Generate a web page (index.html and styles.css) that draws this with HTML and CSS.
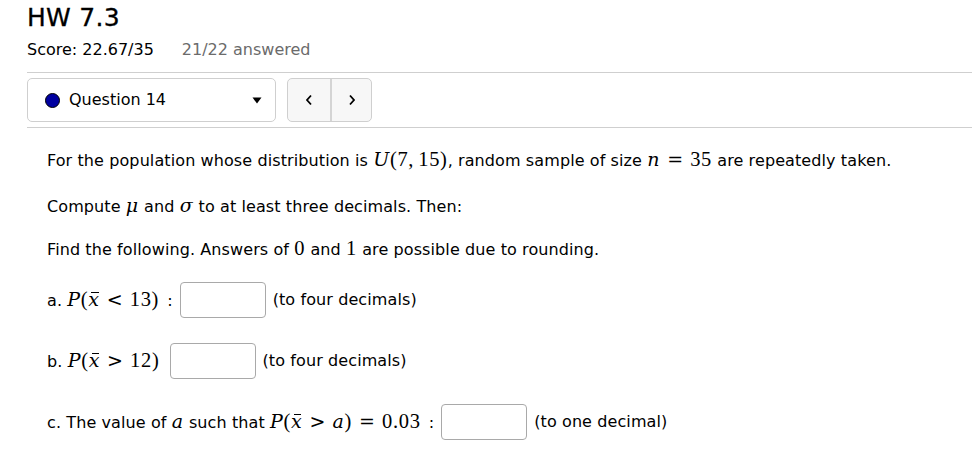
FILE: index.html
```html
<!DOCTYPE html>
<html lang="en">
<head>
<meta charset="utf-8">
<title>HW 7.3</title>
<link rel="stylesheet" href="styles.css">
</head>
<body>
<div class="page">
  <header class="head">
    <h1 class="title">HW 7.3</h1>
    <div class="score"><span>Score: 22.67/35</span><span class="answered">21/22 answered</span></div>
  </header>

  <nav class="navbar">
    <div class="qselect">
      <span class="dot"></span>
      <span class="qname">Question 14</span>
      <svg class="caret" width="10" height="7" viewBox="0 0 10 7"><polygon points="0.5,0.5 9.5,0.5 5,6.5" fill="#000"/></svg>
    </div>
    <div class="pager">
      <button class="pbtn" type="button" aria-label="Previous">
        <svg width="8" height="12" viewBox="0 0 8 12"><polyline points="6,1.5 2,6 6,10.5" fill="none" stroke="#000" stroke-width="1.8"/></svg>
      </button>
      <button class="pbtn" type="button" aria-label="Next">
        <svg width="8" height="12" viewBox="0 0 8 12"><polyline points="2,1.5 6,6 2,10.5" fill="none" stroke="#000" stroke-width="1.8"/></svg>
      </button>
    </div>
  </nav>

  <main class="question">
    <p class="p1">For the population whose distribution is <span class="m"><i>U</i>(7,<span class="thin"></span>15)</span>, random sample of size <span class="m"><i>n</i><span class="rel">=</span>35</span> are repeatedly taken.</p>
    <p class="p2">Compute <span class="m"><i>μ</i></span> and <span class="m"><i>σ</i></span> to at least three decimals. Then:</p>
    <p class="p3">Find the following. Answers of <span class="m">0</span> and <span class="m">1</span> are possible due to rounding.</p>

    <div class="row ra">
      <span class="lbl">a. <span class="m"><i>P</i>(<i class="bar">x</i><span class="rel">&lt;</span>13)</span><span class="colon">:</span></span>
      <input class="ans" type="text">
      <span class="hint">(to four decimals)</span>
    </div>
    <div class="row rb">
      <span class="lbl">b. <span class="m"><i>P</i>(<i class="bar">x</i><span class="rel">&gt;</span>12)</span></span>
      <input class="ans" type="text">
      <span class="hint">(to four decimals)</span>
    </div>
    <div class="row rc">
      <span class="lbl">c. The value of <span class="m"><i>a</i></span> such that <span class="m"><i>P</i>(<i class="bar">x</i><span class="rel">&gt;</span><i>a</i>)<span class="rel">=</span>0.03</span><span class="colon">:</span></span>
      <input class="ans" type="text">
      <span class="hint">(to one decimal)</span>
    </div>
  </main>
</div>
</body>
</html>
```

FILE: styles.css
```css
html, body {
  margin: 0;
  padding: 0;
  background: #fff;
}
body {
  font-family: "DejaVu Sans", "Noto Sans", sans-serif;
  font-size: 16px;
  color: #000;
}
.page {
  padding-left: 27px;
}
.title {
  margin: 3px 0 0 0;
  font-size: 25px;
  line-height: 30px;
  font-weight: normal;
  letter-spacing: 0.3px;
  -webkit-text-stroke: 0.3px #000;
}
.score {
  margin-top: 7px;
  line-height: 20px;
  display: flex;
  gap: 28px;
}
.answered {
  color: #6b6b6b;
}
.navbar {
  margin-top: 12px;
  border-top: 1px solid #cfcfcf;
  border-bottom: 1px solid #cfcfcf;
  padding: 5px 0 5px 0;
  display: flex;
  gap: 11px;
}
.qselect {
  box-sizing: border-box;
  width: 249px;
  height: 44px;
  border: 1px solid #cfcfcf;
  border-radius: 5px;
  display: flex;
  align-items: center;
  padding: 0 13px 0 17px;
}
.dot {
  width: 13px;
  height: 13px;
  border-radius: 50%;
  background: #0000a0;
  border: 1px solid #000;
  flex: none;
}
.qname {
  margin-left: 9px;
  flex: 1;
  line-height: 20px;
}
.caret {
  display: block;
}
.pager {
  display: flex;
  box-sizing: border-box;
  height: 44px;
  border: 1px solid #cfcfcf;
  border-radius: 5px;
  background: #f7f7f7;
  overflow: hidden;
}
.pbtn {
  width: 42px;
  height: 42px;
  border: 0;
  margin: 0;
  padding: 0;
  background: transparent;
  display: flex;
  align-items: center;
  justify-content: center;
}
.pbtn + .pbtn {
  border-left: 2px solid #d4d4d4;
  width: 41px;
}
.pbtn svg {
  display: block;
}
.question {
  padding: 19px 0 0 20px;
  display: flex;
  flex-direction: column;
  letter-spacing: 0.1px;
}
.question p {
  margin: 0;
  line-height: 24px;
}
.p1 { margin-bottom: 20px !important; }
.p2 { margin-bottom: 17px !important; }
.p3 { margin-bottom: 20px !important; }
.m {
  font-family: "Liberation Serif", "DejaVu Serif", serif;
  font-size: 20.5px;
  line-height: 24px;
  white-space: nowrap;
  letter-spacing: 0.7px;
}
.m i {
  font-family: "DejaVu Serif", "Liberation Serif", serif;
  font-style: italic;
  font-size: 19px;
}
.thin {
  display: inline-block;
  width: 4px;
}
.rel {
  display: inline-block;
  width: 30px;
  text-align: center;
  font-family: "DejaVu Serif", serif;
  font-size: 19px;
  letter-spacing: 0;
}
.colon {
  margin-left: 8px;
}
.bar {
  position: relative;
  display: inline-block;
}
.bar::before {
  content: "";
  position: absolute;
  left: 3px;
  right: 1px;
  top: 5px;
  border-top: 1px solid #000;
}
.row {
  display: flex;
  align-items: center;
  gap: 7px;
  height: 36px;
  line-height: 24px;
}
.ra { margin-bottom: 25px; }
.rb { margin-bottom: 25px; }
.ans {
  box-sizing: border-box;
  width: 86px;
  height: 36px;
  border: 1px solid #a9a9a9;
  border-radius: 4px;
  margin: 0;
  padding: 0 4px;
  font: inherit;
  background: #fff;
}
.rb .ans {
  margin-left: 3px;
}
.hint {
  margin-left: 0;
}
```
